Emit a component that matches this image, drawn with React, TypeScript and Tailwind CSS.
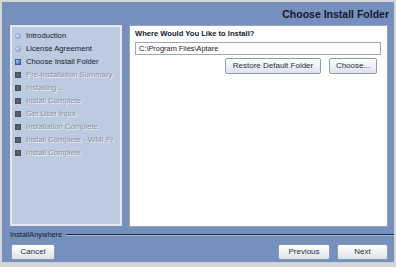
const steps: { label: string; state: 'done' | 'current' | 'todo' }[] = [
  { label: 'Introduction', state: 'done' },
  { label: 'License Agreement', state: 'done' },
  { label: 'Choose Install Folder', state: 'current' },
  { label: 'Pre-Installation Summary', state: 'todo' },
  { label: 'Installing...', state: 'todo' },
  { label: 'Install Complete', state: 'todo' },
  { label: 'Get User Input', state: 'todo' },
  { label: 'Installation Complete', state: 'todo' },
  { label: 'Install Complete - WMI Pr', state: 'todo' },
  { label: 'Install Complete', state: 'todo' },
];

function StepIcon({ state }: { state: 'done' | 'current' | 'todo' }) {
  if (state === 'done') {
    return (
      <span className="w-[6px] h-[6px] rounded-full bg-gradient-to-br from-[#f4f8ff] to-[#7f9fd6] border border-[#8aa4d2]" />
    );
  }
  if (state === 'current') {
    return <span className="w-[6px] h-[6px] bg-gradient-to-br from-[#bcd0f2] to-[#3d62b4] border border-[#3a5aa0]" />;
  }
  return <span className="w-[6px] h-[6px] bg-[#5a5e66] border border-[#4a4e56]" />;
}

function Button({ label, className = '' }: { label: string; className?: string }) {
  return (
    <button
      className={`h-[16px] rounded-[2px] border border-[#8e9bb0] bg-gradient-to-b from-[#ffffff] to-[#dde2ea] text-[8px] text-[#2a3042] flex items-center justify-center ${className}`}
    >
      {label}
    </button>
  );
}

export default function App() {
  return (
    <div className="w-[396px] h-[267px] bg-[#d6d6d6] pt-[2px] px-[2px] pb-[4px] font-['Liberation_Sans',Arial,sans-serif]">
      <div className="h-full bg-[#7590bd] flex flex-col border-b border-[#c8d0dc]">
        <div className="h-[23px] flex items-center justify-end pr-[5px] pt-[1px]">
          <h1 className="text-[10.5px] font-bold text-[#141a2c] leading-none">Choose Install Folder</h1>
        </div>

        <div className="flex h-[202px] pl-[8px] pr-[6px] gap-[7px]">
          <div className="w-[112px] h-[201px] bg-[#bccbdf] border-[2px] border-[#e2e8f1] pt-[2px] pl-[2px]">
            {steps.map((step, idx) => (
              <div key={idx} className="h-[13px] flex items-center gap-[5px] pl-[1px]">
                <StepIcon state={step.state} />
                <span
                  className={
                    step.state === 'todo'
                      ? 'text-[7.7px] text-[#8d95a2] [text-shadow:1px_1px_0_#eef2f7] whitespace-nowrap'
                      : 'text-[7.7px] text-[#141a2c] whitespace-nowrap'
                  }
                >
                  {step.label}
                </span>
              </div>
            ))}
          </div>

          <div className="flex-1 bg-white border border-[#9aa6b8] px-[5px] pt-[4px]">
            <div className="text-[7.6px] font-bold text-[#141a2c] leading-none">Where Would You Like to Install?</div>
            <div className="mt-[4px] h-[13px] border border-[#a3a8b0] flex items-center pl-[3px] text-[7.4px] text-[#1c2233] mr-[1px]">
              C:\Program Files\Aptare
            </div>
            <div className="flex justify-end gap-[8px] mt-[3px] pr-[5px]">
              <Button label="Restore Default Folder" className="w-[96px]" />
              <Button label="Choose..." className="w-[48px]" />
            </div>
          </div>
        </div>

        <div className="flex items-center pl-[8px] pr-0 mt-[3px] h-[10px]">
          <span className="text-[7.4px] text-[#141a2c] leading-none">InstallAnywhere</span>
          <div className="flex-1 ml-[4px] h-[2px] border-t border-[#1e2b48] border-b-[#a9b9d4] border-b" />
        </div>

        <div className="flex items-center justify-between pl-[9px] pr-[6px] mt-[4px]">
          <Button label="Cancel" className="w-[44px] from-[#f2f8fd] to-[#c9ddf0]" />
          <div className="flex gap-[7px]">
            <Button label="Previous" className="w-[52px]" />
            <Button label="Next" className="w-[51px]" />
          </div>
        </div>
      </div>
    </div>
  );
}
